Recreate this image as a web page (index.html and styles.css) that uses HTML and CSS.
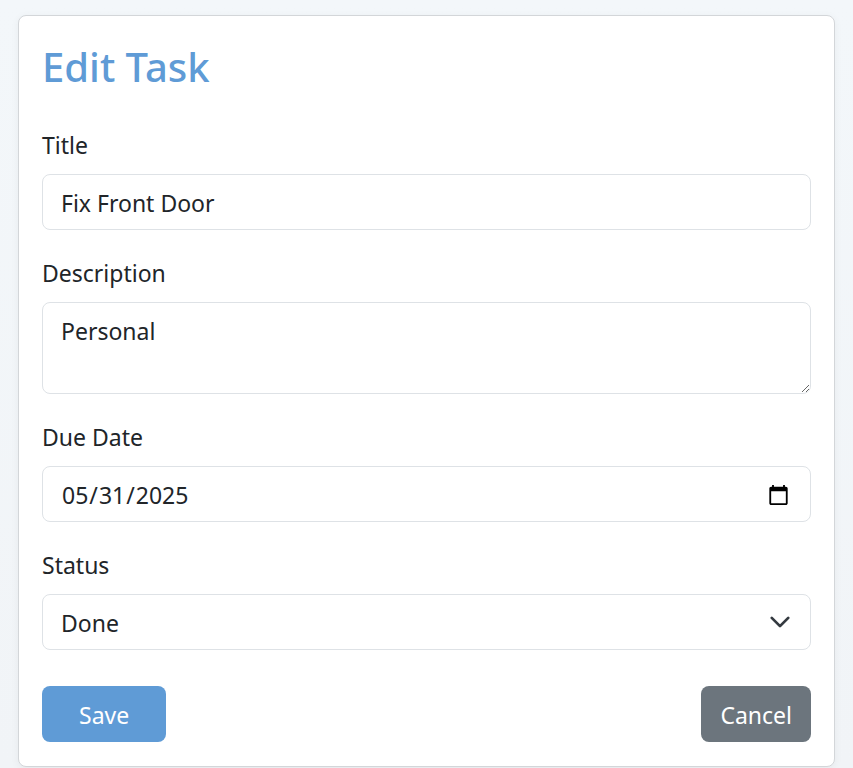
FILE: index.html
```html
<!DOCTYPE html>
<html lang="en">
<head>
<meta charset="utf-8">
<title>Edit Task</title>
<link rel="stylesheet" href="styles.css">
</head>
<body>
<main class="card">
  <h1 class="card-title">Edit Task</h1>
  <form class="task-form">
    <div class="field">
      <label class="field-label" for="title">Title</label>
      <input class="control" id="title" type="text" value="Fix Front Door">
    </div>
    <div class="field">
      <label class="field-label" for="desc">Description</label>
      <textarea class="control control-area" id="desc" rows="2">Personal</textarea>
    </div>
    <div class="field">
      <label class="field-label" for="due">Due Date</label>
      <input class="control" id="due" type="date" value="2025-05-31">
    </div>
    <div class="field">
      <label class="field-label" for="status">Status</label>
      <div class="select-wrap">
        <select class="control control-select" id="status">
          <option>To Do</option>
          <option>In Progress</option>
          <option selected>Done</option>
        </select>
        <svg class="select-chevron" viewBox="0 0 16 16" width="22" height="22" aria-hidden="true">
          <path d="M2 5l6 6 6-6" fill="none" stroke="#343a40" stroke-width="2" stroke-linecap="round" stroke-linejoin="round"/>
        </svg>
      </div>
    </div>
    <div class="actions">
      <button type="submit" class="btn btn-save">Save</button>
      <button type="button" class="btn btn-cancel">Cancel</button>
    </div>
  </form>
</main>
</body>
</html>
```
FILE: styles.css
```css
html, body {
  margin: 0;
  padding: 0;
}
body {
  background: linear-gradient(180deg, #f3f7fa 0%, #f1f4f7 100%);
  font-family: "Noto Sans", "Open Sans", sans-serif;
  color: #212529;
  font-size: 23px;
  line-height: 1.5;
  padding: 15px 18px 0 18px;
  min-height: 768px;
  box-sizing: border-box;
}
.card {
  background: #fff;
  border: 1px solid #d3d6d9;
  border-radius: 8px;
  padding: 24px 23px;
  box-shadow: 0 2px 8px rgba(0, 0, 0, 0.05);
}
.card-title {
  margin: 2px 0 34px 0;
  font-size: 40px;
  line-height: 50px;
  font-weight: 500;
  color: #5f9bd6;
}
.task-form {
  display: flex;
  flex-direction: column;
  gap: 24px;
}
.field {
  display: flex;
  flex-direction: column;
}
.field-label {
  line-height: 36px;
  padding-top: 1px;
  margin-bottom: 11px;
}
.control {
  box-sizing: border-box;
  width: 100%;
  height: 56px;
  padding: 10px 18px 8px 18px;
  font: inherit;
  font-size: 23px;
  line-height: 36px;
  color: #212529;
  background: #fff;
  border: 1px solid #dee2e6;
  border-radius: 8px;
  margin: 0;
  outline: none;
}
.control-area {
  height: 92px;
  resize: vertical;
  display: block;
}
.select-wrap {
  position: relative;
}
.control-select {
  appearance: none;
  -webkit-appearance: none;
  padding-right: 60px;
}
.select-chevron {
  position: absolute;
  right: 20px;
  top: 17px;
  pointer-events: none;
}
.actions {
  display: flex;
  justify-content: space-between;
  margin-top: 12px;
}
.btn {
  height: 56px;
  border: 1px solid transparent;
  border-radius: 8px;
  font: inherit;
  font-size: 23px;
  line-height: 36px;
  padding: 10px 18px 8px 18px;
  color: #fff;
  cursor: pointer;
}
.btn-save {
  background: #5f9bd6;
  padding: 10px 36px 8px 36px;
}
.btn-cancel {
  background: #6c757d;
}
```
